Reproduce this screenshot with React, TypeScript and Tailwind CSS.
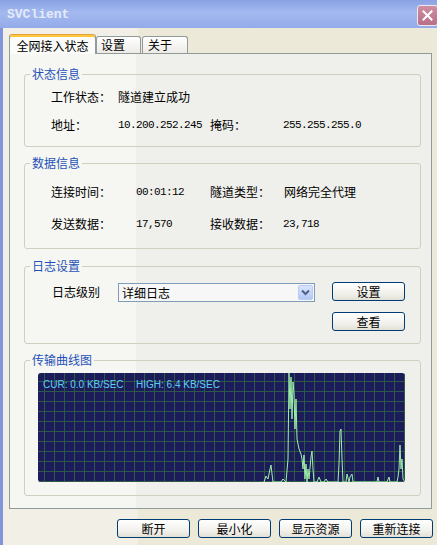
import React from "react";

const cjk = "font-['Noto_Sans_CJK_SC','Noto_Sans',sans-serif]";
const mono = "font-['Liberation_Mono',monospace] text-[11px] tracking-[-0.6px]";

// spikes of the transfer graph, in window coordinates
const spikes: [number, number][] = [
  [265, 483], [267, 477], [269, 480], [271, 470], [272, 466], [273, 475], [274, 483],
  [282, 483], [284, 480], [287, 483], [289, 460], [290, 374], [291, 410], [292, 378],
  [293, 420], [294, 383], [295, 395], [296, 430], [297, 400], [298, 440], [299, 445],
  [300, 450], [302, 455], [303, 460], [304, 470], [305, 456], [306, 480], [307, 465],
  [308, 483], [309, 470], [310, 480], [312, 458], [313, 452], [314, 470], [315, 483],
  [318, 483], [320, 478], [322, 483], [325, 483], [327, 480], [329, 483], [339, 483],
  [340, 465], [341, 432], [342, 430], [343, 460], [344, 483], [347, 483], [348, 475],
  [350, 483], [351, 478], [353, 475], [354, 483], [378, 483], [379, 478], [380, 483],
  [388, 483], [390, 478], [391, 483], [398, 483], [399, 478], [400, 470], [401, 446],
  [402, 470], [403, 460], [404, 480], [406, 483],
];

function XpButton({ children, className = "" }: { children: React.ReactNode; className?: string }) {
  return (
    <button
      className={`flex h-[19px] w-[73px] items-center justify-center rounded-[3px] border border-[#003c74] bg-[linear-gradient(#ffffff,#f2f1ec_60%,#e3e1d6)] text-[12px] leading-none text-black ${cjk} ${className}`}
    >
      {children}
    </button>
  );
}

function Group({ title, className = "", children }: { title: string; className?: string; children: React.ReactNode }) {
  return (
    <fieldset className={`mx-[14px] mr-[10px] rounded-[3px] border border-[#d0d0bf] ${className}`}>
      <legend className={`ml-[5px] px-[2px] text-[12px] leading-[14px] text-[#1f52b8] ${cjk}`}>{title}</legend>
      {children}
    </fieldset>
  );
}

function Chart() {
  const vLines = Array.from({ length: 37 }, (_, i) => 6 + i * 10);
  const hLines = Array.from({ length: 11 }, (_, i) => 8 + i * 10);
  const points = spikes.map(([x, y]) => `${x - 39},${y - 374}`).join(" ");
  return (
    <div className="relative ml-[13px] h-[109px] w-[367px] overflow-hidden rounded-[3px] bg-[#1c1c5a]">
      <svg width="367" height="109" className="block">
        {vLines.map((x) => (
          <line key={"v" + x} x1={x + 0.5} y1={0} x2={x + 0.5} y2={109} stroke="#2e5848" />
        ))}
        {hLines.map((y) => (
          <line key={"h" + y} x1={0} y1={y + 0.5} x2={367} y2={y + 0.5} stroke="#2e5848" />
        ))}
        <polyline points={points} fill="none" stroke="#9fefaa" strokeWidth="1" />
      </svg>
      <div className="absolute left-[5px] top-[6px] flex font-['Liberation_Sans',sans-serif] text-[10px] leading-[12px] text-[#5ccdf2]">
        <span className="w-[93px]">CUR: 0.0 KB/SEC</span>
        <span>HIGH: 6.4 KB/SEC</span>
      </div>
    </div>
  );
}

export default function App() {
  return (
    <div className="flex h-[545px] w-[437px] flex-col overflow-hidden bg-[#ece9d8]">
      {/* title bar */}
      <div className="flex h-[28px] shrink-0 items-start justify-between bg-[linear-gradient(#8aa2e4,#a3b9ef_45%,#93abe9)]">
        <span className="mt-[8px] pl-[7px] font-['Liberation_Mono',monospace] text-[13px] font-bold leading-[14px] text-[#e4eaf9]">
          SVClient
        </span>
        <div className="mr-[-1px] mt-[5px] flex h-[21px] w-[21px] items-center justify-center rounded-[3px] border border-[#f0e6ee] bg-[linear-gradient(#cf8fa2,#b96f86)]">
          <svg width="11" height="11" viewBox="0 0 11 11">
            <path d="M1.5 1.5 L9.5 9.5 M9.5 1.5 L1.5 9.5" stroke="#ffffff" strokeWidth="2" strokeLinecap="square" />
          </svg>
        </div>
      </div>

      <div className="flex flex-1 flex-col border-l-[3px] border-[#8195dd] bg-[linear-gradient(to_right,#f1efe6_135px,#ece9d8_135px)]">
        {/* tabs */}
        <div className="ml-[6px] mt-[6px] flex items-end">
          <div
            className={`relative z-10 -mb-px flex h-[20px] w-[87px] items-center justify-center rounded-t-[3px] border border-b-0 border-[#919b9c] border-t-[#e6a23a] bg-[#fbfbf9] pt-[2px] text-[12px] text-black shadow-[inset_0_2px_0_#ffc83c] ${cjk}`}
          >
            全网接入状态
          </div>
          <div
            className={`flex h-[17px] w-[45px] items-center rounded-t-[3px] border border-b-0 border-[#919b9c] bg-[linear-gradient(#ffffff,#ecebe6)] pl-[4px] text-[12px] text-black ${cjk}`}
          >
            设置
          </div>
          <div
            className={`ml-[1px] flex h-[17px] w-[46px] items-center rounded-t-[3px] border border-b-0 border-[#919b9c] bg-[linear-gradient(#ffffff,#ecebe6)] pl-[5px] text-[12px] text-black ${cjk}`}
          >
            关于
          </div>
        </div>

        {/* tab panel */}
        <div className="ml-[6px] flex h-[456px] w-[423px] flex-col border border-[#919b9c] bg-[linear-gradient(to_right,#f6f6f2_126px,#efefeb_126px)]">
          <Group title="状态信息" className="mt-[13px]">
            <div className={`flex flex-col gap-[10px] pb-[12px] pl-[26px] pt-[7px] text-[12px] text-black ${cjk}`}>
              <div className="flex h-[18px] items-center">
                <span className="w-[67px]">工作状态：</span>
                <span>隧道建立成功</span>
              </div>
              <div className="flex h-[18px] items-center">
                <span className="w-[67px]">地址：</span>
                <span className={`w-[92px] ${mono}`}>10.200.252.245</span>
                <span className="w-[73px]">掩码：</span>
                <span className={mono}>255.255.255.0</span>
              </div>
            </div>
          </Group>

          <Group title="数据信息" className="mt-[9px]">
            <div className={`flex flex-col gap-[14px] pb-[15px] pl-[26px] pt-[13px] text-[12px] text-black ${cjk}`}>
              <div className="flex h-[18px] items-center">
                <span className="w-[85px]">连接时间：</span>
                <span className={`w-[74px] ${mono}`}>00:01:12</span>
                <span className="w-[74px]">隧道类型：</span>
                <span>网络完全代理</span>
              </div>
              <div className="flex h-[18px] items-center">
                <span className="w-[85px]">发送数据：</span>
                <span className={`w-[74px] ${mono}`}>17,570</span>
                <span className="w-[73px]">接收数据：</span>
                <span className={mono}>23,718</span>
              </div>
            </div>
          </Group>

          <Group title="日志设置" className="mt-[10px]">
            <div className={`flex pb-[12px] pl-[27px] pt-[9px] text-[12px] text-black ${cjk}`}>
              <span className="mt-[2px] w-[66px] leading-[16px]">日志级别</span>
              <div className="mt-[1px] flex h-[19px] w-[197px] items-center justify-between border border-[#7f9db9] bg-[#f7f7f7] pl-[3px] pr-[1px]">
                <span className="leading-none">详细日志</span>
                <div className="flex h-[15px] w-[15px] items-center justify-center rounded-[2px] border border-[#b9cbf3] bg-[linear-gradient(#d9e4fd,#b3c8f7)]">
                  <svg width="9" height="7" viewBox="0 0 9 7">
                    <path d="M1 1.5 L4.5 5 L8 1.5" fill="none" stroke="#4d6185" strokeWidth="2" />
                  </svg>
                </div>
              </div>
              <div className="ml-[17px] flex flex-col gap-[11px]">
                <XpButton>设置</XpButton>
                <XpButton>查看</XpButton>
              </div>
            </div>
          </Group>

          <Group title="传输曲线图" className="mt-[9px]">
            <div className="pb-[13px] pt-[6px]">
              <Chart />
            </div>
          </Group>
        </div>

        {/* bottom buttons */}
        <div className="mt-[10px] flex justify-end gap-[8px] pr-[4px]">
          <XpButton>断开</XpButton>
          <XpButton>最小化</XpButton>
          <XpButton>显示资源</XpButton>
          <XpButton>重新连接</XpButton>
        </div>
      </div>
    </div>
  );
}
